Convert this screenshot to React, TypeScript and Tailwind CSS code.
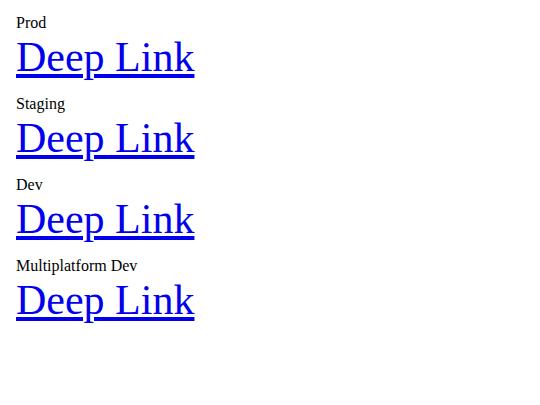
const LINKS = ["Prod", "Staging", "Dev", "Multiplatform Dev"];

export default function App()
{
  return (
    <div className="min-h-screen bg-white px-4 pt-[13px] font-['Liberation_Serif','Times_New_Roman',serif] text-black">
      {LINKS.map((env) => (
        <div key={env} className="mb-[13.5px] flex flex-col items-start">
          <div className="text-[16px] leading-[19.5px]">{env}</div>
          <a href="#" className="text-[42px] leading-[48px] text-[#0000ee] underline">
            Deep Link
          </a>
        </div>
      ))}
    </div>
  );
}
